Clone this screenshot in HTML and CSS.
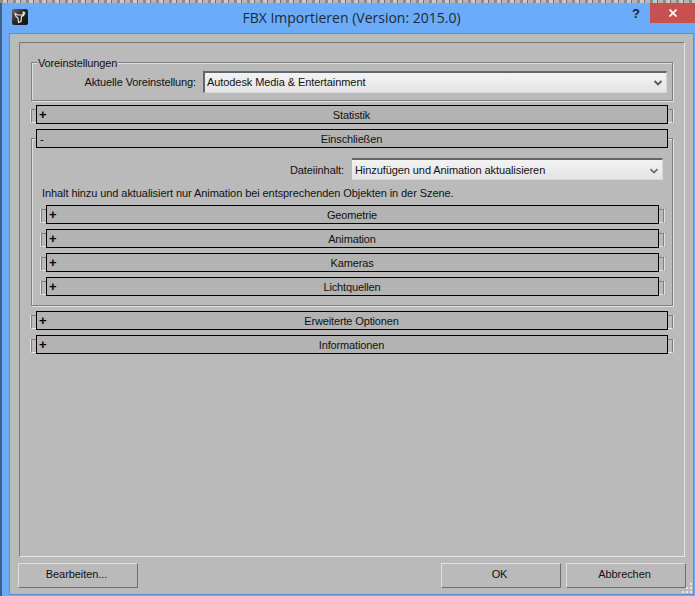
FILE: index.html
```html
<!DOCTYPE html>
<html lang="de">
<head>
<meta charset="utf-8">
<title>FBX Importieren</title>
<link rel="stylesheet" href="styles.css">
</head>
<body>
<div class="desktop-strip"></div>
<div class="window">
  <header class="titlebar">
    <svg class="app-icon" viewBox="0 0 16 16" width="16" height="16">
      <defs><linearGradient id="iconbg" x1="0" y1="0" x2="1" y2="1"><stop offset="0" stop-color="#6a6a6a"/><stop offset="0.5" stop-color="#262626"/><stop offset="1" stop-color="#111"/></linearGradient></defs>
      <rect width="16" height="16" rx="2" fill="url(#iconbg)"/>
      <path d="M3 4.5l3 1.5h4l3-2.5-1.5 3-2 1-.5 5-2.500 1-.5-4.500-2-1.500z" fill="none" stroke="#e4e4e4" stroke-width="1.2"/>
      <circle cx="11.500" cy="3.500" r="1" fill="#f0f0f0"/>
    </svg>
    <div class="title">FBX Importieren (Version: 2015.0)</div>
    <div class="help">?</div>
    <div class="close">
      <svg viewBox="0 0 8 8" width="8" height="8"><path d="M0.5 0.5l7 7M7.5 0.5l-7 7" stroke="#fff" stroke-width="1.8"/></svg>
    </div>
  </header>
  <main class="client">
    <div class="panel">
      <section class="group">
        <div class="legend">Voreinstellungen</div>
        <div class="field-row preset-row">
          <span class="field-label">Aktuelle Voreinstellung:</span>
          <div class="combo combo-wide">
            <span>Autodesk Media &amp; Entertainment</span>
            <svg class="chevron" viewBox="0 0 8 6" width="8" height="6"><path d="M0.5 1l3.5 3.5L7.5 1" fill="none" stroke="#555" stroke-width="1.8"/></svg>
          </div>
        </div>
      </section>

      <div class="stack">
        <div class="rollout">
          <span class="bracket bracket-left"></span>
          <div class="bar"><span class="sign">+</span><span class="bar-title">Statistik</span></div>
          <span class="bracket bracket-right"></span>
        </div>

        <div class="open-rollout">
          <div class="rollout rollout-head">
            <span class="bracket-gap"></span>
            <div class="bar"><span class="sign sign-minus">-</span><span class="bar-title">Einschließen</span></div>
            <span class="bracket-gap"></span>
          </div>
          <div class="pane">
            <div class="field-row content-row">
              <span class="field-label">Dateiinhalt:</span>
              <div class="combo combo-content">
                <span>Hinzufügen und Animation aktualisieren</span>
                <svg class="chevron" viewBox="0 0 8 6" width="8" height="6"><path d="M0.5 1l3.5 3.5L7.5 1" fill="none" stroke="#666" stroke-width="1.6"/></svg>
              </div>
            </div>
            <p class="note">Inhalt hinzu und aktualisiert nur Animation bei entsprechenden Objekten in der Szene.</p>
            <div class="stack">
              <div class="rollout">
                <span class="bracket bracket-left"></span>
                <div class="bar"><span class="sign">+</span><span class="bar-title">Geometrie</span></div>
                <span class="bracket bracket-right"></span>
              </div>
              <div class="rollout">
                <span class="bracket bracket-left"></span>
                <div class="bar"><span class="sign">+</span><span class="bar-title">Animation</span></div>
                <span class="bracket bracket-right"></span>
              </div>
              <div class="rollout">
                <span class="bracket bracket-left"></span>
                <div class="bar"><span class="sign">+</span><span class="bar-title">Kameras</span></div>
                <span class="bracket bracket-right"></span>
              </div>
              <div class="rollout">
                <span class="bracket bracket-left"></span>
                <div class="bar"><span class="sign">+</span><span class="bar-title">Lichtquellen</span></div>
                <span class="bracket bracket-right"></span>
              </div>
            </div>
          </div>
        </div>

        <div class="rollout">
          <span class="bracket bracket-left"></span>
          <div class="bar"><span class="sign">+</span><span class="bar-title">Erweiterte Optionen</span></div>
          <span class="bracket bracket-right"></span>
        </div>
        <div class="rollout">
          <span class="bracket bracket-left"></span>
          <div class="bar"><span class="sign">+</span><span class="bar-title">Informationen</span></div>
          <span class="bracket bracket-right"></span>
        </div>
      </div>
    </div>

    <footer class="buttons">
      <button class="btn" type="button">Bearbeiten...</button>
      <span class="spacer"></span>
      <button class="btn" type="button">OK</button>
      <button class="btn" type="button">Abbrechen</button>
    </footer>
    <svg class="grip" viewBox="0 0 11 11" width="11" height="11">
      <path d="M8 0h2v2H8zM4 4h2v2H4zM8 4h2v2H8zM0 8h2v2H0zM4 8h2v2H4zM8 8h2v2H8z" fill="#e8e8e8"/>
    </svg>
  </main>
</div>
</body>
</html>
```
FILE: styles.css
```css
* { box-sizing: border-box; }
html, body { margin: 0; padding: 0; }
body {
  width: 695px;
  height: 596px;
  overflow: hidden;
  background: #6aabfa;
  font-family: "Liberation Sans", Arial, sans-serif;
  font-size: 11px;
  line-height: 13px;
  letter-spacing: -0.08px;
  color: #111;
  display: flex;
  flex-direction: column;
}
.desktop-strip {
  height: 3px;
  flex: none;
  background: repeating-linear-gradient(90deg, #8b8b8b 0 3px, #c9c9c9 3px 7px, #6f6f6f 7px 8px, #b5b5b5 8px 13px);
}
.window {
  flex: 1;
  display: flex;
  flex-direction: column;
  padding: 0 1px 1px 7px;
  border-left: 2px solid #3f5f86;
  position: relative;
}
.titlebar {
  height: 30px;
  flex: none;
  display: flex;
  align-items: flex-start;
  margin-right: -1px;
}
.app-icon { margin: 6px 0 0 3px; flex: none; }
.title {
  flex: 1;
  text-align: center;
  font-family: "Open Sans", sans-serif;
  font-size: 14px;
  line-height: 20px;
  letter-spacing: 0;
  margin-top: 5px;
  padding-left: 49px;
  color: #1f2a36;
}
.help {
  width: 20px;
  text-align: center;
  font-weight: bold;
  font-size: 13px;
  line-height: 14px;
  margin: 4px 4px 0 0;
  color: #222;
}
.close {
  width: 45px;
  height: 20px;
  background: #c75050;
  display: flex;
  align-items: center;
  justify-content: center;
}
.client {
  flex: 1;
  position: relative;
  display: flex;
  flex-direction: column;
  background: #bababa;
  border: 1px solid #5a8fd0;
  padding: 8px 7px 6px 8px;
}
.panel {
  flex: 1;
  margin: 0 1px 0 1px;
  border-style: solid;
  border-width: 1px;
  border-color: #787878 #e6e6e6 #e6e6e6 #787878;
  padding: 19px 11px 0 11px;
}
.group {
  height: 39px;
  border: 1px solid #808080;
  box-shadow: 1px 1px 0 #e0e0e0, inset 1px 1px 0 #dedede;
  padding: 0 5px 0 5px;
}
.legend {
  width: fit-content;
  margin: -6px 0 0 0;
  padding: 0 1px;
  height: 13px;
  background: #bababa;
  letter-spacing: -0.13px;
}
.field-row { display: flex; align-items: center; justify-content: flex-end; }
.preset-row { margin-top: 1px; }
.field-label { margin-right: 7px; }
.preset-row .field-label { letter-spacing: -0.12px; }
.combo {
  display: flex;
  align-items: center;
  justify-content: space-between;
  height: 22px;
  padding: 0 4px 0 2px;
  background: linear-gradient(#f3f3f3, #e4e4e4);
  border-top: 2px solid #5e6770;
  border-bottom: 1px solid #d8d8d8;
  border-right: 1px solid #d8d8d8;
}
.combo-wide { width: 464px; border-left: 2px solid #5e6770; }
.combo-content { width: 311px; padding: 2px 4px 0 3px; }
.stack { display: flex; flex-direction: column; gap: 5px; }
.panel > .stack { margin-top: 4px; }
.rollout { display: flex; align-items: flex-start; height: 19px; }
.bar {
  flex: 1;
  height: 19px;
  position: relative;
  display: flex;
  align-items: center;
  justify-content: center;
  padding: 1px 1px 0 0;
  background: #b3b3b3;
  border: 1px solid #000;
}
.bar-title { letter-spacing: -0.14px; }
.sign {
  position: absolute;
  left: 2px;
  top: 2px;
  font-size: 13px;
  font-weight: bold;
  line-height: 14px;
  color: #000;
}
.sign-minus { font-weight: normal; font-size: 11px; top: 2px; left: 3px; }
.bracket, .bracket-gap { width: 5px; flex: none; }
.bracket {
  height: 14px;
  margin-top: 4px;
  border-top: 1px solid #808080;
  border-bottom: 1px solid #e6e6e6;
}
.bracket-left { border-left: 1px solid #808080; box-shadow: -1px 0 0 #e0e0e0; }
.bracket-right { border-right: 1px solid #808080; box-shadow: 1px 0 0 #e0e0e0; }
.open-rollout { display: flex; flex-direction: column; }
.rollout-head { position: relative; z-index: 1; }
.pane {
  margin-top: -10px;
  height: 168px;
  border: 1px solid #808080;
  box-shadow: 1px 1px 0 #e0e0e0, inset 1px 1px 0 #dedede;
  padding: 19px 8px 0 9px;
}
.content-row { margin-right: 1px; }
.content-row .field-label { margin: 2px 8px 0 0; }
.note { margin: 7px 0 5px 1px; height: 13px; }
.buttons {
  display: flex;
  flex: none;
  gap: 5px;
  margin-top: 6px;
}
.spacer { flex: 1; }
.btn {
  width: 120px;
  height: 25px;
  font: inherit;
  letter-spacing: inherit;
  color: #111;
  background: #bababa;
  border-style: solid;
  border-width: 1px;
  border-color: #e0e0e0 #6e6e6e #6e6e6e #e0e0e0;
  padding: 0 3px 2px 0;
}
.grip { position: absolute; right: 0; bottom: 0; }
```
